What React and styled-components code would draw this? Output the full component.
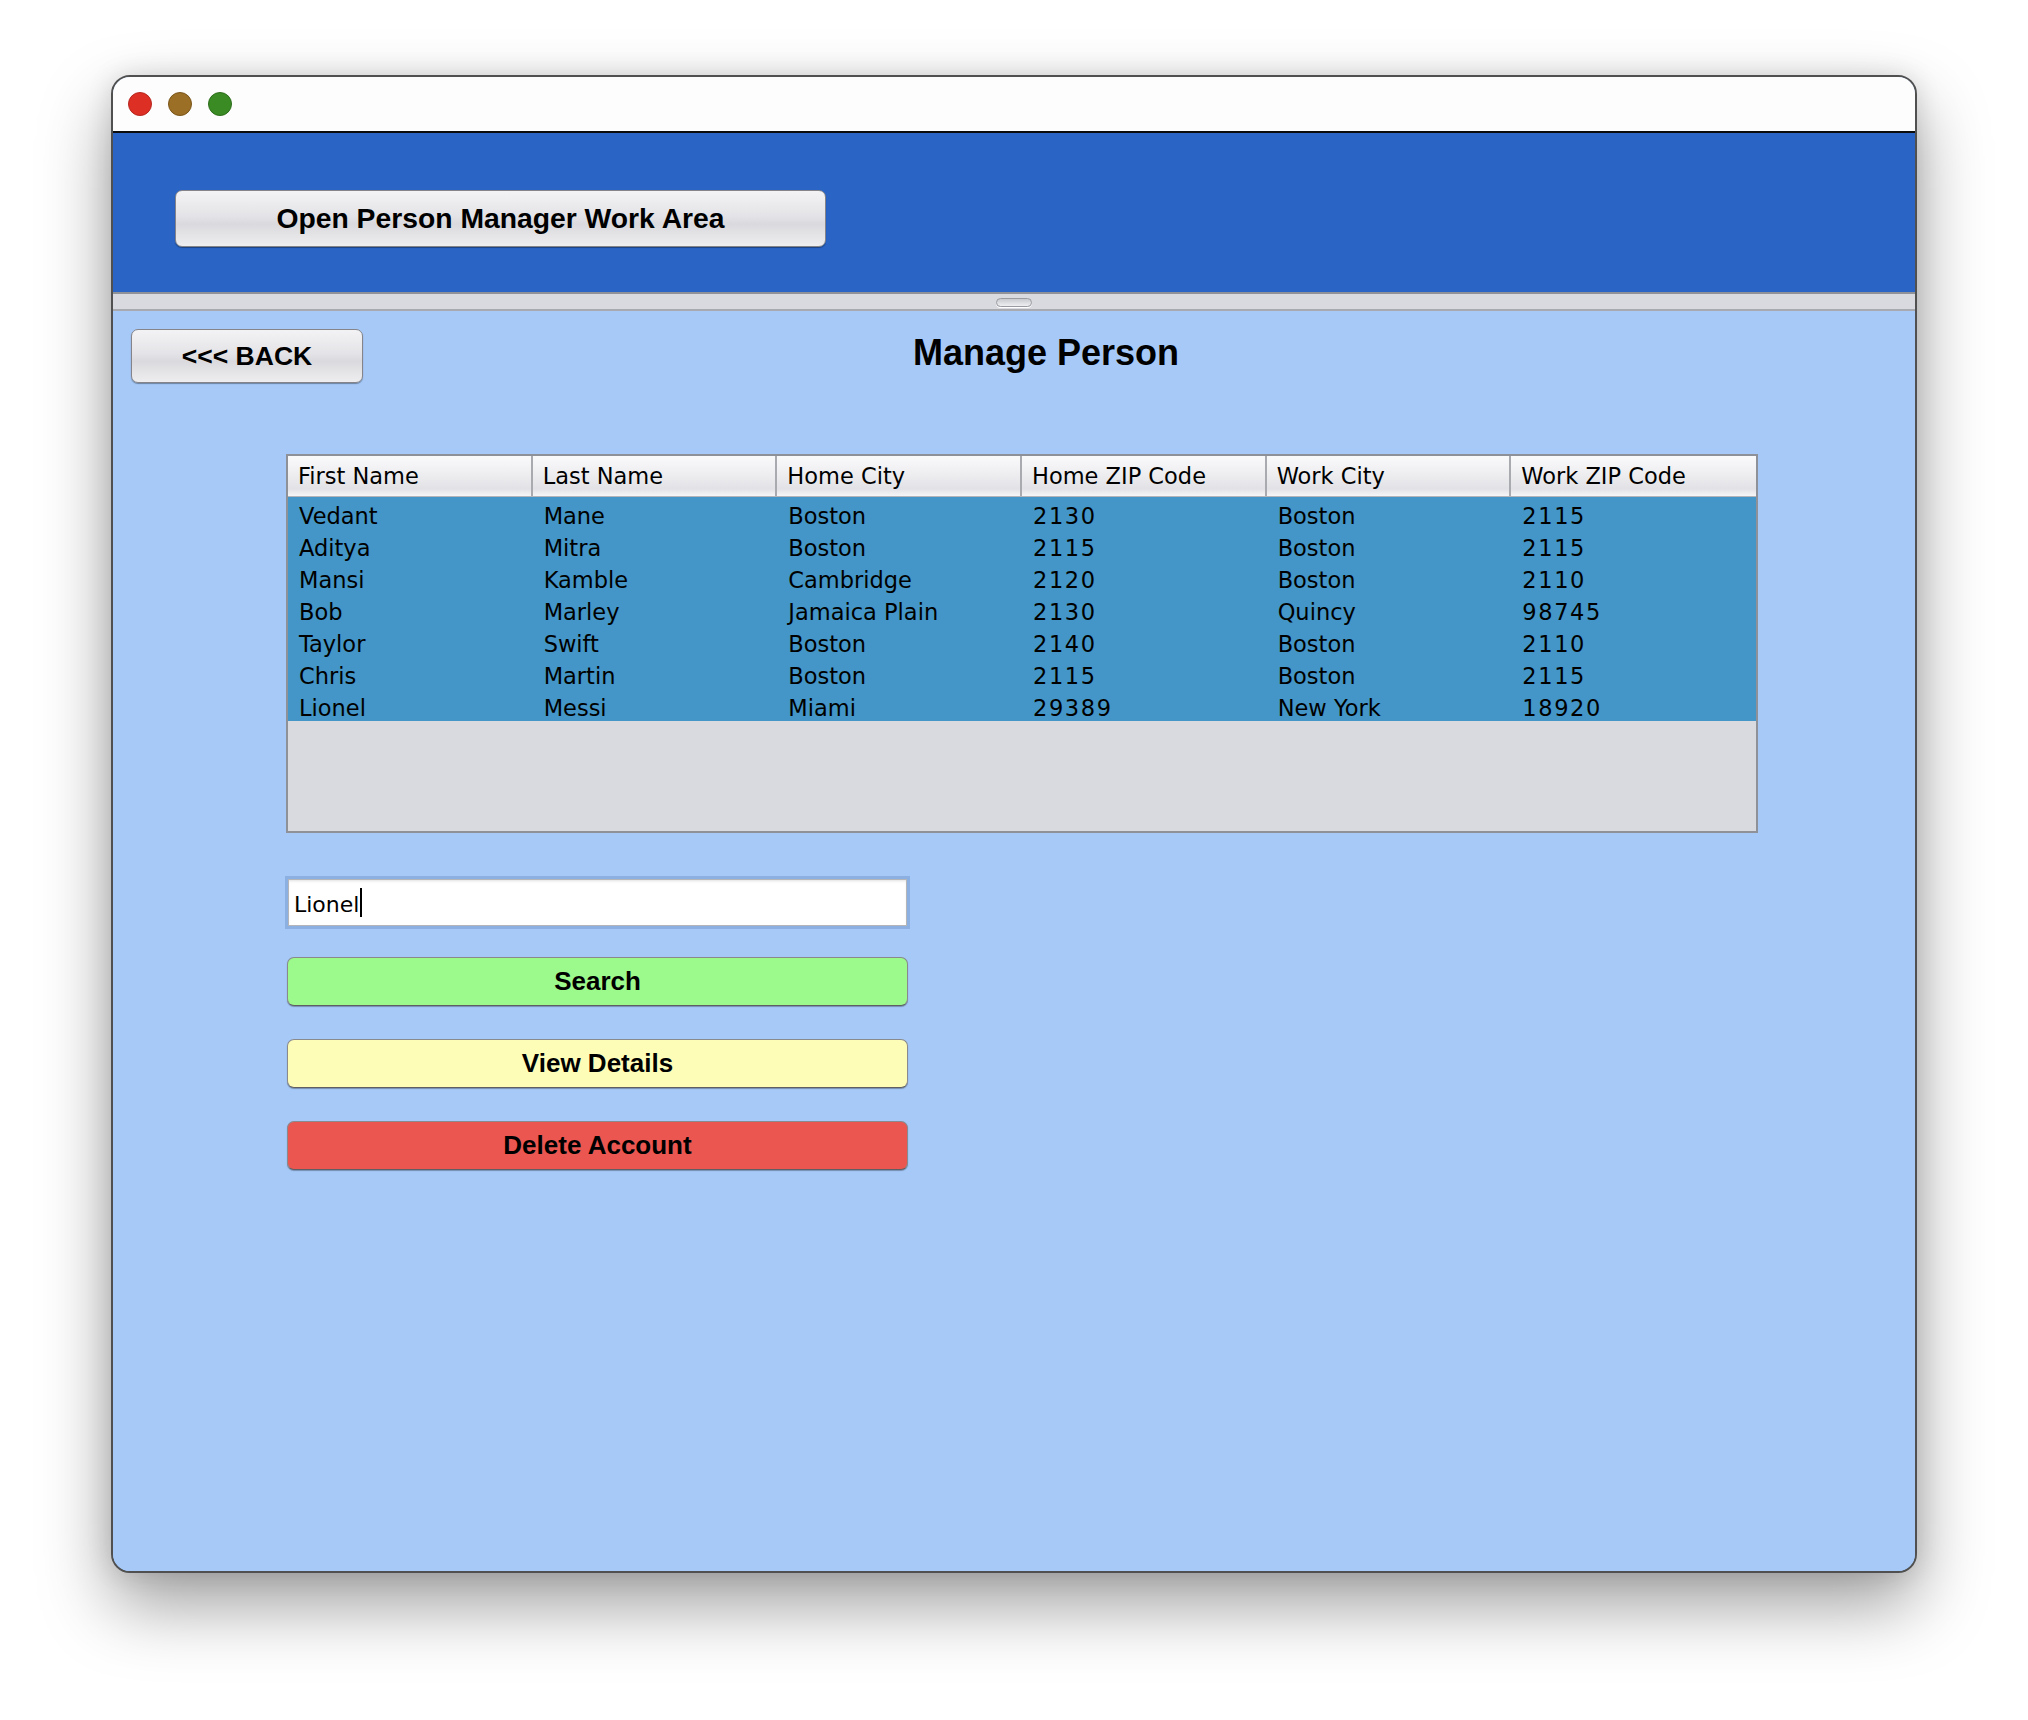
import React from "react";
import styled, { createGlobalStyle } from "styled-components";

const GlobalStyle = createGlobalStyle`
  html, body {
    margin: 0;
    padding: 0;
    background: #ffffff;
  }
  body {
    font-family: "Liberation Sans", Arial, sans-serif;
  }
`;

const people = [
  ["Vedant", "Mane", "Boston", "2130", "Boston", "2115"],
  ["Aditya", "Mitra", "Boston", "2115", "Boston", "2115"],
  ["Mansi", "Kamble", "Cambridge", "2120", "Boston", "2110"],
  ["Bob", "Marley", "Jamaica Plain", "2130", "Quincy", "98745"],
  ["Taylor", "Swift", "Boston", "2140", "Boston", "2110"],
  ["Chris", "Martin", "Boston", "2115", "Boston", "2115"],
  ["Lionel", "Messi", "Miami", "29389", "New York", "18920"],
];

const columns = [
  "First Name",
  "Last Name",
  "Home City",
  "Home ZIP Code",
  "Work City",
  "Work ZIP Code",
];

// zip code columns get a little extra tracking, like the wide digits of the original
const zipCols = [3, 5];

const App = () => {
  return (
    <>
      <GlobalStyle />
      <Page>
        <Window>
          <TitleBar>
            <Light $color="#de2f25" $edge="#b5281f" />
            <Light $color="#9b6f25" $edge="#7a561b" />
            <Light $color="#3b8b25" $edge="#2d6d1c" />
          </TitleBar>
          <Header>
            <MacButton $width={651} $height={57} $size={28.3}>
              Open Person Manager Work Area
            </MacButton>
          </Header>
          <Divider>
            <Grip />
          </Divider>
          <Content>
            <TopRow>
              <MacButton $width={232} $height={54} $size={26.5}>
                &lt;&lt;&lt; BACK
              </MacButton>
              <Title>Manage Person</Title>
            </TopRow>
            <Body>
              <Table>
                <HeadRow>
                  {columns.map((c) => (
                    <HeadCell key={c}>{c}</HeadCell>
                  ))}
                </HeadRow>
                {people.map((p) => (
                  <Row key={p[0]}>
                    {p.map((v, i) => (
                      <Cell key={i} $num={zipCols.includes(i)}>
                        {v}
                      </Cell>
                    ))}
                  </Row>
                ))}
                <Empty />
              </Table>
              <Field>
                Lionel
                <Caret />
              </Field>
              <Actions>
                <ActionButton $bg="#9cf98b">Search</ActionButton>
                <ActionButton $bg="#fefdb8">View Details</ActionButton>
                <ActionButton $bg="#eb5750">Delete Account</ActionButton>
              </Actions>
            </Body>
          </Content>
        </Window>
      </Page>
    </>
  );
};

export default App;

const Page = styled.div`
  width: 2028px;
  height: 1720px;
  padding: 75px 0 0 111px;
  box-sizing: border-box;
`;

const Window = styled.div`
  width: 1806px;
  height: 1498px;
  box-sizing: border-box;
  border: 2px solid #505050;
  border-radius: 19px;
  overflow: hidden;
  display: flex;
  flex-direction: column;
  background: #a6c9f8;
  box-shadow: 0 32px 70px rgba(0, 0, 0, 0.38), 0 0 26px rgba(0, 0, 0, 0.12);
`;

const TitleBar = styled.div`
  height: 54px;
  flex-shrink: 0;
  background: #fdfdfd;
  border-bottom: 2px solid #0c0c0c;
  display: flex;
  align-items: center;
  gap: 16px;
  padding-left: 15px;
`;

const Light = styled.span`
  width: 22px;
  height: 22px;
  border-radius: 50%;
  background: ${(p) => p.$color};
  border: 1px solid ${(p) => p.$edge};
`;

const Header = styled.div`
  height: 159px;
  flex-shrink: 0;
  box-sizing: border-box;
  background: #2a65c6;
  padding: 57px 0 0 62px;
`;

const MacButton = styled.div`
  width: ${(p) => p.$width}px;
  height: ${(p) => p.$height}px;
  box-sizing: border-box;
  display: flex;
  align-items: center;
  justify-content: center;
  border: 1.5px solid #858589;
  border-radius: 7px;
  background: linear-gradient(#f3f3f5 0%, #e4e4e8 45%, #dadade 60%, #eeeef0 100%);
  box-shadow: 0 1px 1px rgba(0, 0, 0, 0.35);
  font-size: ${(p) => p.$size}px;
  font-weight: bold;
  color: #000;
  flex-shrink: 0;
`;

const Divider = styled.div`
  height: 19px;
  flex-shrink: 0;
  box-sizing: border-box;
  background: #d9dadf;
  border-top: 2px solid #8f9297;
  border-bottom: 2px solid #a8aab0;
  display: flex;
  justify-content: center;
  padding-top: 4px;
`;

const Grip = styled.div`
  width: 36px;
  height: 9px;
  box-sizing: border-box;
  border: 1px solid #9a9ba0;
  border-radius: 5px;
  background: linear-gradient(#c9cacf, #eeeff2);
  box-shadow: 0 1px 0 #ffffff;
`;

const Content = styled.div`
  flex: 1;
  background: #a6c9f8;
  padding: 18px 0 0 18px;
`;

const TopRow = styled.div`
  display: flex;
  align-items: flex-start;
`;

const Title = styled.h1`
  margin: 4px 0 0 550px;
  font-size: 36px;
  line-height: 40px;
  font-weight: bold;
  color: #000;
`;

const Body = styled.div`
  margin: 71px 0 0 155px;
  display: flex;
  flex-direction: column;
`;

const Table = styled.div`
  width: 1472px;
  height: 379px;
  box-sizing: border-box;
  border: 2px solid #8e9197;
  background: #d9dadf;
  display: flex;
  flex-direction: column;
  font-family: "DejaVu Sans", "Liberation Sans", sans-serif;
  font-size: 22.5px;
  color: #000;
`;

const HeadRow = styled.div`
  display: grid;
  grid-template-columns: repeat(6, 1fr);
  height: 41px;
  box-sizing: border-box;
  border-bottom: 1px solid #b3b4b9;
  background: linear-gradient(#fafafb 0%, #eeeef1 45%, #e2e2e6 82%, #f6f6f8 100%);
`;

const HeadCell = styled.div`
  line-height: 40px;
  padding-left: 10px;
  white-space: nowrap;
  border-right: 2px solid #a9aaaf;

  &:last-child {
    border-right: none;
  }
`;

const Row = styled.div`
  display: grid;
  grid-template-columns: repeat(6, 1fr);
  height: 32px;
  background: #4396c7;
`;

const Cell = styled.div`
  height: 32px;
  box-sizing: border-box;
  padding: 3px 0 0 11px;
  line-height: 32px;
  white-space: nowrap;
  letter-spacing: ${(p) => (p.$num ? "1.6px" : "0")};
`;

const Empty = styled.div`
  flex: 1;
  background: #d9dadf;
`;

const Field = styled.div`
  margin: 43px 0 0 -1px;
  width: 625px;
  height: 53px;
  box-sizing: border-box;
  border: 3px solid #8db0e2;
  background: #ffffff;
  box-shadow: inset 0 0 0 1px #b4b5b9, inset 0 2px 3px rgba(0, 0, 0, 0.12);
  display: flex;
  align-items: center;
  padding: 3px 0 0 6px;
  font-family: "DejaVu Sans", "Liberation Sans", sans-serif;
  font-size: 22px;
  color: #000;
`;

const Caret = styled.span`
  display: inline-block;
  width: 2px;
  height: 29px;
  margin-left: 1px;
  margin-top: -3px;
  background: #000;
`;

const Actions = styled.div`
  margin: 28px 0 0 1px;
  display: flex;
  flex-direction: column;
  gap: 33px;
`;

const ActionButton = styled.div`
  width: 621px;
  height: 49px;
  box-sizing: border-box;
  display: flex;
  align-items: center;
  justify-content: center;
  border: 1.5px solid #8a8a8e;
  border-bottom-color: #5f5f63;
  border-radius: 7px;
  background: ${(p) => p.$bg};
  box-shadow: 0 1px 1px rgba(0, 0, 0, 0.3);
  font-size: 26px;
  font-weight: bold;
  color: #000;
`;
